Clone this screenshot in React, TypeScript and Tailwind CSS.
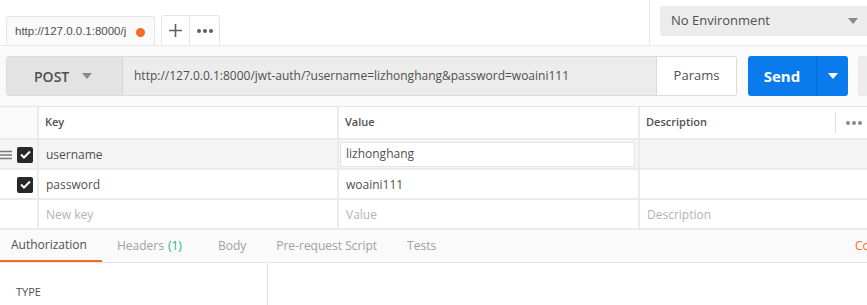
import React from "react";

const Caret = ({ color = "#8a8a8a" }: { color?: string }) => (
  <svg width="10" height="6" viewBox="0 0 10 6"><path d="M0 0 L10 0 L5 6 Z" fill={color} /></svg>
);

const Check = () => (
  <div className="w-[16px] h-[16px] rounded-[2px] bg-[#282828] flex items-center justify-center">
    <svg width="11" height="9" viewBox="0 0 11 9"><path d="M1 4.5 L4 7.5 L10 1.5" stroke="white" strokeWidth="2" fill="none" /></svg>
  </div>
);

const COLS = "grid grid-cols-[39px_300px_301px_1fr]";

export default function App() {
  return (
    <div className="w-[867px] h-[305px] overflow-hidden bg-white text-[#505050]" style={{ fontFamily: '"Open Sans", sans-serif' }}>
      {/* top tabs row */}
      <div className="flex h-[46px] border-b border-[#e8e8e8] overflow-hidden">
        <div className="flex items-end pl-[6px] gap-[6px] w-[649px] shrink-0">
          <div className="w-[149px] h-[30px] -mb-px border border-b-0 border-[#e6e6e6] bg-[#fafafa] rounded-t-[3px] flex items-center pl-[8px] pr-[9px] pt-[1px]">
            <span className="text-[11.5px] whitespace-nowrap overflow-hidden w-[111px]" style={{ fontFamily: '"Liberation Sans", Arial, sans-serif' }}>http://127.0.0.1:8000/jwt-auth/</span>
            <span className="ml-auto w-[9px] h-[9px] rounded-full bg-[#f26b2a]" />
          </div>
          <div className="h-[30px] border border-b-0 border-[#e6e6e6] rounded-t-[3px] flex">
            <div className="w-[28px] flex items-center justify-center border-r border-[#e6e6e6]">
              <svg width="13" height="13" viewBox="0 0 13 13"><path d="M6.5 0 V13 M0 6.5 H13" stroke="#606060" strokeWidth="1.6" /></svg>
            </div>
            <div className="w-[29px] flex items-center justify-center gap-[2px]">
              <span className="w-[4px] h-[4px] rounded-full bg-[#606060]" />
              <span className="w-[4px] h-[4px] rounded-full bg-[#606060]" />
              <span className="w-[4px] h-[4px] rounded-full bg-[#606060]" />
            </div>
          </div>
        </div>
        <div className="flex-1 border-l border-[#e8e8e8] pl-[10px] pt-[6px] shrink-0">
          <div className="w-[220px] h-[30px] bg-[#ececec] rounded-[3px] flex items-center pl-[11px]">
            <span className="text-[13px] w-[177px] shrink-0">No Environment</span>
            <Caret />
          </div>
        </div>
      </div>

      {/* request bar */}
      <div className="bg-[#fafafa] h-[61px] pt-[10px] pl-[6px] flex border-b border-[#e6e6e6] overflow-hidden">
        <div className="flex h-[40px] w-[731px] shrink-0 border border-[#dcdcdc] rounded-[3px] overflow-hidden">
          <div className="w-[116px] bg-[#e3e3e3] flex items-center pl-[27px] border-r border-[#d6d6d6]">
            <span className="text-[14px] font-semibold text-[#505050]">POST</span>
            <span className="ml-[13px]"><Caret /></span>
          </div>
          <div className="flex-1 bg-[#ececec] flex items-center pl-[11px]">
            <span className="text-[12px] whitespace-nowrap">http://127.0.0.1:8000/jwt-auth/?username=lizhonghang&amp;password=woaini111</span>
          </div>
          <div className="w-[80px] bg-white border-l border-[#dcdcdc] flex items-center justify-center">
            <span className="text-[13px]">Params</span>
          </div>
        </div>
        <div className="ml-[11px] h-[40px] w-[100px] shrink-0 bg-[#097bed] rounded-[3px] flex">
          <div className="w-[69px] flex items-center justify-center border-r border-[#0a6ad0]">
            <span className="text-[15px] font-bold text-white">Send</span>
          </div>
          <div className="flex-1 flex items-center justify-center">
            <Caret color="#ffffff" />
          </div>
        </div>
        <div className="ml-[10px] h-[40px] w-[40px] shrink-0 bg-[#ececec] rounded-l-[3px]" />
      </div>

      {/* params table */}
      <div className="text-[12px]">
        <div className={`${COLS} h-[33px] border-b-2 border-[#ebebeb]`}>
          <div className="bg-[#fafafa] border-r-2 border-[#ebebeb]" />
          <div className="border-r-2 border-[#ebebeb] flex items-center pl-[6px] text-[11px] font-semibold">Key</div>
          <div className="border-r-2 border-[#ebebeb] flex items-center pl-[6px] text-[11px] font-semibold">Value</div>
          <div className="flex items-center pl-[6px] text-[11px] font-semibold">
            <span>Description</span>
            <div className="ml-auto h-[22px] border-l border-[#e0e0e0] w-[32px] flex items-center justify-end pr-[5px] gap-[2px]">
              <span className="w-[4px] h-[4px] rounded-full bg-[#8a8a8a]" />
              <span className="w-[4px] h-[4px] rounded-full bg-[#8a8a8a]" />
              <span className="w-[4px] h-[4px] rounded-full bg-[#8a8a8a]" />
            </div>
          </div>
        </div>
        <div className={`${COLS} h-[30px] border-b-2 border-[#ebebeb] bg-[#f5f5f5]`}>
          <div className="border-r-2 border-[#ebebeb] flex items-center pr-[4px] pt-[1px]">
            <svg width="12" height="10" viewBox="0 0 12 10" className="mr-auto"><path d="M0 1.5 H12 M0 5 H12 M0 8.5 H12" stroke="#7a7a7a" strokeWidth="1.3" /></svg>
            <Check />
          </div>
          <div className="border-r-2 border-[#ebebeb] flex items-center pl-[7px] pt-[1px]">username</div>
          <div className="border-r-2 border-[#ebebeb] flex items-center pl-[1px] pr-[2px]">
            <div className="w-[295px] h-[25px] bg-white border border-[#e3e3e3] flex items-center pl-[5px]">lizhonghang</div>
          </div>
          <div />
        </div>
        <div className={`${COLS} h-[30px] border-b-2 border-[#ebebeb] bg-white`}>
          <div className="border-r-2 border-[#ebebeb] flex items-center justify-end pr-[4px] pt-[1px]">
            <Check />
          </div>
          <div className="border-r-2 border-[#ebebeb] flex items-center pl-[7px] pt-[1px]">password</div>
          <div className="border-r-2 border-[#ebebeb] flex items-center pl-[7px] pt-[1px]">woaini111</div>
          <div />
        </div>
        <div className={`${COLS} h-[30px] border-b-2 border-[#ebebeb] bg-white text-[#b3b3b3]`}>
          <div className="border-r-2 border-[#ebebeb]" />
          <div className="border-r-2 border-[#ebebeb] flex items-center pl-[7px] pt-[1px]">New key</div>
          <div className="border-r-2 border-[#ebebeb] flex items-center pl-[7px] pt-[1px]">Value</div>
          <div className="flex items-center pl-[7px] pt-[1px]">Description</div>
        </div>
      </div>

      {/* sub tabs */}
      <div className="h-[33px] bg-[#fafafa] border-b border-[#e6e6e6] flex items-stretch text-[12px] overflow-hidden">
        <div className="w-[102px] shrink-0 flex items-center pl-[11px] border-b-[3px] border-[#f26b2a] -mb-px text-[#505050]">Authorization</div>
        <div className="flex items-center ml-[15px] text-[#a0a0a0] shrink-0">Headers <span className="ml-[4px] text-[#26b47f]">(1)</span></div>
        <div className="flex items-center ml-[36px] text-[#a0a0a0] shrink-0">Body</div>
        <div className="flex items-center ml-[30px] text-[#a0a0a0] shrink-0">Pre-request Script</div>
        <div className="flex items-center ml-[30px] text-[#a0a0a0] shrink-0">Tests</div>
        <div className="flex items-center ml-auto w-[12px] shrink-0 text-[#f26b2a] whitespace-nowrap">Cookies</div>
      </div>

      <div className="flex h-[60px]">
        <div className="w-[268px] border-r border-[#e6e6e6] pl-[16px] pt-[21px]">
          <div className="text-[11px] text-[#505050]">TYPE</div>
          <div className="mt-[6px] w-[229px] h-[28px] bg-[#ececec] rounded-[3px]" />
        </div>
        <div className="flex-1" />
      </div>
    </div>
  );
}
